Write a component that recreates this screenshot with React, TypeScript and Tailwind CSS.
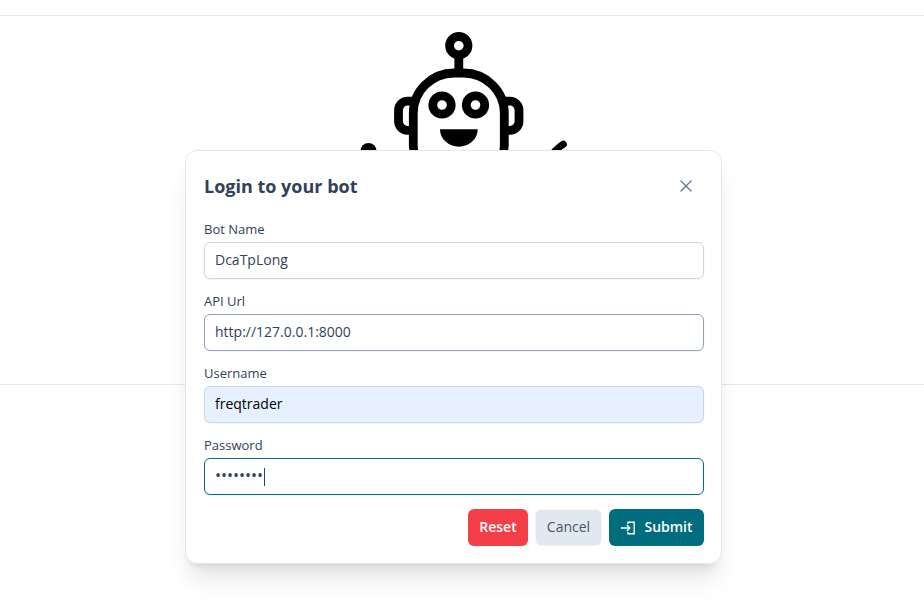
import { useState } from 'react';

type FieldProps = {
  id: string;
  label: string;
  type?: string;
  initial: string;
  tone: string;
  autoFocus?: boolean;
};

function Field({ id, label, type = 'text', initial, tone, autoFocus }: FieldProps) {
  const [value, setValue] = useState(initial);
  return (
    <div className="relative flex flex-col">
      <label htmlFor={id} className="mb-[3px] text-[13px] leading-5">
        {label}
      </label>
      <input
        id={id}
        type={type}
        value={value}
        autoFocus={autoFocus}
        onChange={(e) => setValue(e.target.value)}
        className={`h-[37px] w-full rounded-md border px-2.5 pb-[3px] shadow-xs outline-none ${tone}`}
      />
      {autoFocus && value === initial && (
        <span aria-hidden="true" className="absolute bottom-[9px] left-[60px] h-[18px] w-px bg-slate-700" />
      )}
    </div>
  );
}

function Robot() {
  return (
    <svg
      viewBox="0 0 240 140"
      width="240"
      height="140"
      fill="none"
      stroke="#000"
      strokeWidth="8.8"
      aria-hidden="true"
    >
      <circle cx="118.8" cy="29.7" r="9.2" />
      <path d="M118.8 38v18" />
      <path d="M78 142q-4.500-4-4.700-12V97A41 40 0 0 1 114 57h9.500a41 40 0 0 1 40.800 40v33q-.2 8-4.800 12" />
      <path d="M73 85.200h-5.500a9 9 0 0 0-9 9v11.100a9 9 0 0 0 9 9H73M164.500 85.200h5.500a9 9 0 0 1 9 9v11.100a9 9 0 0 1-9 9h-5.500" />
      <circle cx="102" cy="89" r="9.2" />
      <circle cx="135.500" cy="89" r="9.2" />
      <path d="M100 113.200h37.700a18.850 17.500 0 0 1-37.700 0z" fill="#000" stroke="none" />
      <circle cx="28.500" cy="135" r="8" fill="#000" stroke="none" />
      <path d="M223.300 128.300q-4 2.500-8.300 6.700" strokeLinecap="round" strokeWidth="7.2" />
    </svg>
  );
}

export default function App() {
  return (
    <div className="relative min-h-screen bg-white font-['Segoe_UI','Open_Sans','Noto_Sans',sans-serif] text-slate-700">
      <header className="h-4 border-b border-slate-200" />
      <main className="flex h-[369px] justify-center border-b border-slate-200 pr-1">
        <Robot />
      </main>

      <div className="absolute inset-x-0 top-[150px] flex justify-center pr-[17px]">
        <section
          role="dialog"
          aria-labelledby="login-title"
          className="w-full max-w-[537px] rounded-xl border border-slate-200 bg-white py-[17px] pr-[17px] pl-[18px] shadow-[0_20px_25px_-5px_rgba(0,0,0,0.1),0_8px_10px_-6px_rgba(0,0,0,0.1)]"
        >
          <div className="flex h-9 items-center justify-between">
            <h1 id="login-title" className="text-lg font-bold">
              Login to your bot
            </h1>
            <button
              type="button"
              aria-label="Close"
              className="flex size-9 items-center justify-center rounded-full text-slate-500"
            >
              <svg viewBox="0 0 12 12" width="12" height="12" fill="none" stroke="currentColor" strokeWidth="1.300" strokeLinecap="round">
                <path d="M1 1l10 10M11 1L1 11" />
              </svg>
            </button>
          </div>

          <form className="mt-[15px] flex flex-col gap-3" onSubmit={(e) => e.preventDefault()}>
            <Field id="bot-name" label="Bot Name" initial="DcaTpLong" tone="border-slate-300 text-sm" />
            <Field id="api-url" label="API Url" initial="http://127.0.0.1:8000" tone="border-slate-400 text-sm" />
            <Field
              id="username"
              label="Username"
              initial="freqtrader"
              tone="border-slate-300 bg-[#e6f0ff] text-sm text-black"
            />
            <Field
              id="password"
              label="Password"
              type="password"
              initial="password"
              tone="border-[#006d7f] text-base caret-transparent"
              autoFocus
            />
            <div className="mt-0.5 flex justify-end gap-[7px] text-sm">
              <button type="reset" className="h-[37px] w-[60px] rounded-md bg-[#f43f48] pb-0.5 font-semibold text-white">
                Reset
              </button>
              <button
                type="button"
                className="h-[37px] w-[67px] rounded-md border border-slate-100 bg-slate-200 pb-0.5 text-slate-600"
              >
                Cancel
              </button>
              <button
                type="submit"
                className="flex h-[37px] w-[95px] items-center justify-center gap-2 rounded-md bg-[#006d7f] font-semibold text-white"
              >
                <svg viewBox="0 0 16 16" width="16" height="16" fill="none" stroke="currentColor" strokeWidth="1.400" aria-hidden="true">
                  <path d="M.8 8h9M6.800 5L9.800 8l-3 3M8 4V2.300h6.200v11.400H8V12" />
                </svg>
                <span className="pb-0.5">Submit</span>
              </button>
            </div>
          </form>
        </section>
      </div>
    </div>
  );
}
